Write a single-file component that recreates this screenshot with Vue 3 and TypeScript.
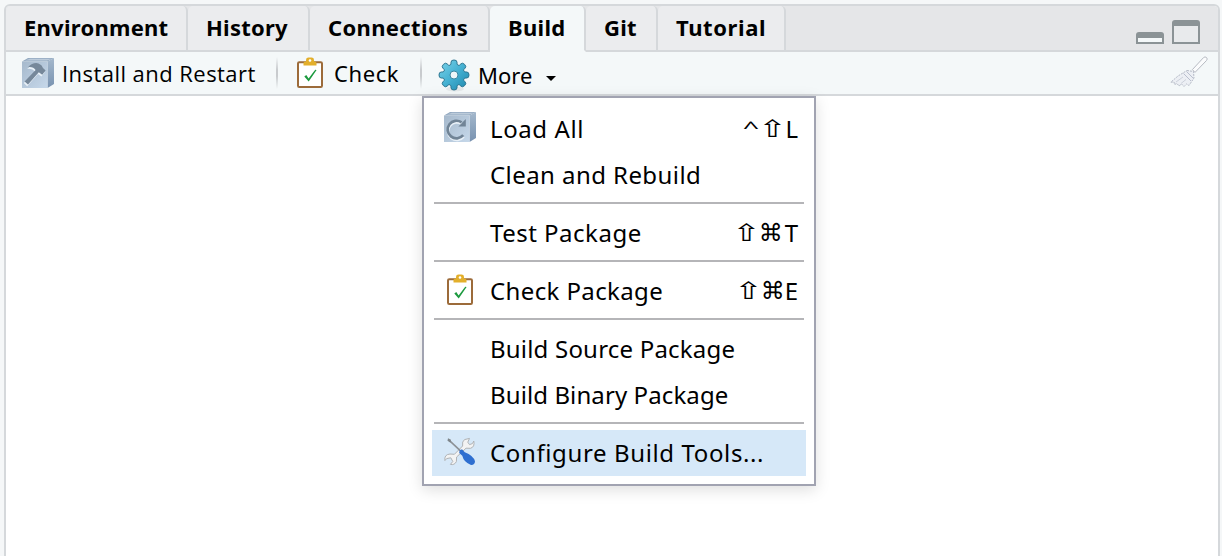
<script setup lang="ts">
interface Tab { label: string; cls: string; active?: boolean }
interface Item { label: string; cls: string; icon?: string; mods?: string[]; key?: string; selected?: boolean }

const tabs: Tab[] = [
  { label: 'Environment', cls: 'environment' },
  { label: 'History', cls: 'history' },
  { label: 'Connections', cls: 'connections' },
  { label: 'Build', cls: 'build', active: true },
  { label: 'Git', cls: 'git' },
  { label: 'Tutorial', cls: 'tutorial' },
]

const groups: Item[][] = [
  [
    { label: 'Load All', cls: 'load', icon: 'load', mods: ['^', '⇧'], key: 'L' },
    { label: 'Clean and Rebuild', cls: 'clean' },
  ],
  [{ label: 'Test Package', cls: 'test', mods: ['⇧', '⌘'], key: 'T' }],
  [{ label: 'Check Package', cls: 'checkpkg', icon: 'check', mods: ['⇧', '⌘'], key: 'E' }],
  [
    { label: 'Build Source Package', cls: 'source' },
    { label: 'Build Binary Package', cls: 'binary' },
  ],
  [{ label: 'Configure Build Tools...', cls: 'configure', icon: 'tools', selected: true }],
]
const modClass: Record<string, string> = { '^': 'ctrl', '⇧': 'shift', '⌘': 'cmd' }

// Outline of an eight-toothed gear centred on the origin.
function gearPath(): string {
  const parts: string[] = []
  for (let i = 0; i < 8; i++) {
    const a = (i * Math.PI) / 4
    const p = (x: number, y: number): string =>
      `${(x * Math.cos(a) - y * Math.sin(a)).toFixed(2)} ${(x * Math.sin(a) + y * Math.cos(a)).toFixed(2)}`
    parts.push(`${i ? 'L' : 'M'}${p(-4, -9.7)}Q${p(-2.6, -10.6)} ${p(-3, -12.8)}Q${p(-3, -15)} ${p(0, -15)}Q${p(3, -15)} ${p(3, -12.8)}Q${p(2.6, -10.6)} ${p(4, -9.7)}`)
  }
  return parts.join('') + 'Z'
}
const gear = gearPath()
</script>

<template>
  <div class="page">
    <svg class="defs" width="0" height="0" aria-hidden="true">
      <defs>
        <linearGradient id="face" x1="0" y1="0" x2="1" y2="1">
          <stop offset="0" stop-color="#a6b9cc" /><stop offset="1" stop-color="#c6d8ea" />
        </linearGradient>
        <linearGradient id="side" x1="0" y1="0" x2="0" y2="1">
          <stop offset="0" stop-color="#a4b8cc" /><stop offset="1" stop-color="#7892b0" />
        </linearGradient>
        <linearGradient id="gear" x1="0" y1="0" x2="1" y2="1">
          <stop offset="0" stop-color="#7bd3ea" /><stop offset=".5" stop-color="#45b1d2" /><stop offset="1" stop-color="#1d86ac" />
        </linearGradient>
        <symbol id="cube" viewBox="0 0 32 30">
          <path d="M0 3.5 6 0H32L25.5 3.5Z" fill="#93a9c0" />
          <path d="M3 2.6 8 .8H30L25 2.6Z" fill="#bccbda" />
          <path d="M25.5 3.5 32 0V26L25.5 30Z" fill="url(#side)" />
          <path d="M0 3.5H25.5V30H0Z" fill="url(#face)" />
        </symbol>
        <symbol id="clipboard" viewBox="0 0 28 32">
          <rect x="2" y="5.3" width="24" height="24.7" rx="1.2" fill="#fff" stroke="#9c6b3a" stroke-width="2" />
          <path d="M7.5 8.6V6Q7.5 4.6 10 4.6V3Q10 .6 12.5 .6H15.5Q18 .6 18 3V4.6Q20.5 4.6 20.5 6V8.6Z" fill="#e3af2b" />
          <circle cx="14" cy="3.5" r="1.3" fill="#fff" />
          <path d="M8.3 19.6 10.3 18 12.6 21.4 19.2 12.8 20.6 12.9 12.7 24.4Z" fill="#1c9a3f" />
        </symbol>
      </defs>
    </svg>

    <section class="pane">
      <header class="tabbar">
        <div v-for="tab in tabs" :key="tab.label" class="tab" :class="[tab.cls, { active: tab.active }]">{{ tab.label }}</div>
        <div class="window-controls">
          <svg width="28" height="12" viewBox="0 0 28 12"><path d="M0 12V3Q0 0 3 0H25Q28 0 28 3V12Z" fill="#8b9396" /><path d="M2 6H26V10H2Z" fill="#f4f8f9" /></svg>
          <svg width="28" height="24" viewBox="0 0 28 24"><path d="M0 24V3Q0 0 3 0H25Q28 0 28 3V24Z" fill="#8b9396" /><path d="M2 6H26V22H2Z" fill="#e8eaec" /></svg>
        </div>
      </header>

      <div class="toolbar">
        <svg class="hammer" width="32" height="30" viewBox="0 0 32 30">
          <use href="#cube" width="32" height="30" />
          <path d="M6 9.6Q11 4.4 16.5 5.8 20 7 21 10.5L23.6 12.8 20.2 17.2 16.8 14.6 6 27 2.6 23.8 13.6 12.4Q11.5 9 6 9.6Z" fill="#e9f1f8" transform="translate(-.8 1.3)" />
          <path d="M6 9.2Q11 4 16.5 5.4 20 6.6 21 10.1L23.6 12.4 20.2 16.8 16.8 14.2 6 26.6 2.6 23.4 13.6 12Q11.5 8.6 6 9.2Z" fill="#76889a" />
        </svg>
        <span class="install">Install and Restart</span>
        <i class="divider" />
        <svg class="clip" width="28" height="32"><use href="#clipboard" /></svg>
        <span class="check">Check</span>
        <i class="divider" />
        <svg class="gear" width="32" height="34" viewBox="-16 -16 32 34">
          <ellipse cx="1" cy="14" rx="9" ry="2.5" fill="#000" opacity=".06" />
          <path :d="gear" fill="url(#gear)" stroke="#2e7792" />
          <circle r="4" fill="#eef6f8" stroke="#3a88a3" />
        </svg>
        <span class="more">More</span>
        <svg class="caret" width="10" height="5" viewBox="0 0 10 5"><path d="M0 0H10L5 5Z" /></svg>
        <svg class="broom" width="38" height="32" viewBox="0 0 38 32">
          <path d="M36.5 1.5Q38 3 36.5 4.5L25 16.4 22.4 13.6 33.5 1.6Q35 .2 36.5 1.5Z" fill="#fbfcfd" stroke="#b6bac2" />
          <path d="M17 14.5 23.5 15.5 24 22 19 29.5 16.5 28 14 30.5 11.5 28 9 30 7 27.5 4.5 28.5 4 26 .8 26.2 8 20Z" fill="#eceff4" stroke="#b4b9c5" stroke-dasharray="2 1" />
          <path d="M16.5 15.5 23.5 22.5M13.5 17.5 21 25" fill="none" stroke="#b9bfce" />
          <path d="M6 26 13 21M11 27.5 16 23.5" fill="none" stroke="#ccd1db" />
        </svg>
      </div>
      <main class="content" />
    </section>

    <div class="menu">
      <template v-for="(group, g) in groups" :key="g">
        <hr v-if="g > 0" />
        <div v-for="item in group" :key="item.label" class="item" :class="[item.cls, { selected: item.selected }]">
          <span class="icon">
            <svg v-if="item.icon === 'load'" width="32" height="30" viewBox="0 0 32 30">
              <use href="#cube" width="32" height="30" />
              <path d="M17.6 10.6A8.8 8.8 0 1 0 19.4 23.4" transform="translate(.3 1.4)" fill="none" stroke="#e9f1f8" stroke-width="2.6" />
              <path d="M17.6 10.4A8.8 8.8 0 1 0 19.2 23.2" fill="none" stroke="#718496" stroke-width="2.7" />
              <path d="M21.8 7V14.4H14.4Z" fill="#718496" />
            </svg>
            <svg v-else-if="item.icon === 'check'" width="28" height="32"><use href="#clipboard" /></svg>
            <svg v-else-if="item.icon === 'tools'" width="32" height="30" viewBox="0 0 32 30">
              <path d="M20.5 2.6 25.5 1.4 23.8 5.2 25.5 7.6 28.4 6.6 29.8 4Q31 10 26.5 11.3L22 11.2 12.6 20 12.4 24.5Q10.5 28.4 6.4 27.4L8.8 24.5 6.8 20.8 2.6 21.6.9 23.6Q0 17.5 6 17L10.4 17.3 18.6 9Q17.8 4.4 20.5 2.6Z" fill="#f3f3f3" stroke="#b0b3b6" />
              <path d="M5 3.2 17 14.4" stroke="#8c9196" stroke-width="1.6" /><path d="M4 1.2 7 2.7 6.5 5.7 3.5 3.7Z" fill="#7f868b" />
              <path d="M15.6 13.6 18 12.2 20.8 15.2Q29.4 18.6 31 24.2 30.8 28.2 27 28 19.8 25.4 18.3 18.8L15.2 16Z" fill="#2f6fd0" />
            </svg>
          </span>
          <span class="label">{{ item.label }}</span>
          <span v-if="item.key" class="keys"><span v-for="m in item.mods" :key="m" class="mod" :class="modClass[m]">{{ m }}</span><span class="key">{{ item.key }}</span></span>
        </div>
      </template>
    </div>
  </div>
</template>

<style>
body { margin: 0; overflow: hidden; }
</style>
<style scoped>
.page { position: relative; height: 556px; overflow: hidden; box-sizing: border-box; padding: 4px 2px 0 4px; background: #f5f7f8; color: #000; font-family: "Noto Sans", "Open Sans", sans-serif; white-space: nowrap; }
.defs { position: absolute; }
.pane { box-sizing: border-box; height: 560px; border: 2px solid #d5d8db; border-radius: 6px 6px 0 0; background: #fff; display: flex; flex-direction: column; overflow: hidden; }

.tabbar { display: flex; flex: none; height: 46px; background: #e5e6e8; }
.tab { box-sizing: border-box; height: 46px; padding-left: 18px; border-right: 2px solid #d5d8db; border-bottom: 2px solid #d5d8db; background: #ebecee; border-radius: 5px 5px 0 0; font-size: 22px; font-weight: 700; line-height: 42px; }
.tab.active { background: #f4f8f9; border-bottom-color: #f4f8f9; }
.environment { width: 182px; letter-spacing: 0.25px; }
.history { width: 122px; letter-spacing: 0.25px; }
.connections { width: 180px; letter-spacing: 0.35px; }
.build { width: 96px; letter-spacing: 0.3px; }
.git { width: 72px; letter-spacing: 0.2px; }
.tutorial { width: 128px; letter-spacing: 0.6px; }
.window-controls { flex: 1; display: flex; justify-content: flex-end; align-items: flex-end; gap: 8px; padding: 0 18px 6px 0; border-bottom: 2px solid #d5d8db; box-sizing: border-box; }

.toolbar { display: flex; align-items: center; flex: none; box-sizing: border-box; height: 44px; padding: 0 10px 0 16px; background: #f4f8f9; border-bottom: 2px solid #d5d8db; font-size: 22px; }
.toolbar > * { flex: none; }
.content { flex: 1; }
.divider { width: 2px; height: 32px; background: linear-gradient(#f4f8f9, #c8cbce 40%, #c8cbce 60%, #f4f8f9); }
.install { box-sizing: border-box; width: 222px; padding-left: 8px; font-family: "Open Sans", "Noto Sans", sans-serif; letter-spacing: 0.45px; }
.clip { margin-left: 18px; }
.check { width: 86px; margin-left: 10px; letter-spacing: 0.6px; }
.gear { margin: 6px 0 0 16px; }
.more { width: 68px; margin: 4px 0 0 8px; }
.caret { margin-top: 10px; }
.broom { margin: 0 0 2px auto; }

.menu { position: absolute; left: 422px; top: 96px; box-sizing: border-box; width: 394px; height: 390px; padding: 8px; border: 2px solid #a1a3b1; background: #fff; box-shadow: 0 4px 14px rgba(0, 0, 0, 0.13); font-size: 24px; }
.item { display: flex; align-items: center; height: 46px; line-height: 46px; }
.item.selected { background: #d6e8f8; }
.icon { display: flex; align-items: center; box-sizing: border-box; width: 58px; height: 46px; padding: 0 0 2px 12px; }
.load .icon { padding-bottom: 4px; }
.checkpkg .icon { padding: 0 0 2px 14px; }
.label { flex: 1; }
.load .label { letter-spacing: 0.6px; }
.clean .label { letter-spacing: 0.43px; }
.test .label { letter-spacing: 0.5px; }
.checkpkg .label { letter-spacing: 0.38px; }
.source .label { letter-spacing: 0.2px; }
.binary .label { letter-spacing: 0.1px; }
.configure .label { letter-spacing: 0.62px; }
.keys { display: flex; padding-right: 8px; }
.mod { display: block; text-align: center; }
.ctrl { width: 18px; transform: scale(1.2, 0.7); transform-origin: 50% 14px; }
.shift { width: 25px; font-family: "DejaVu Sans", sans-serif; transform: scaleX(1.4); }
.cmd { width: 24px; font-family: "DejaVu Sans", sans-serif; }
.test .cmd { margin-right: 2px; }
hr { height: 2px; margin: 4px 2px 6px; border: 0; background: #b5b5b8; }
</style>
